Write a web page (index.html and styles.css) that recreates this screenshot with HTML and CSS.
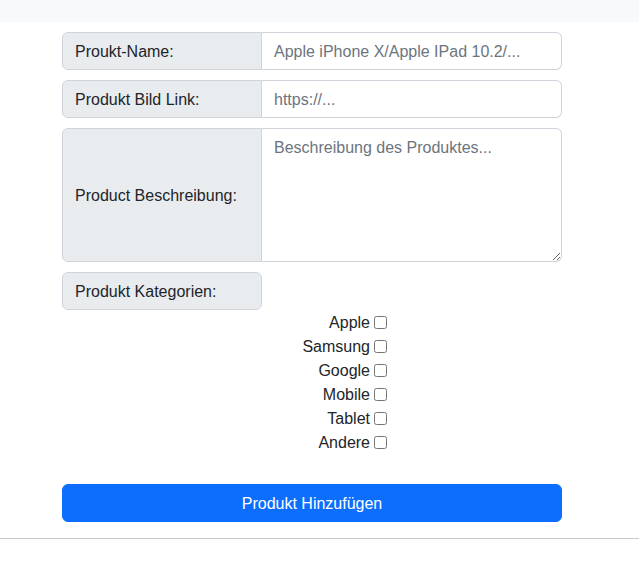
FILE: index.html
```html
<!DOCTYPE html>
<html lang="de">
<head>
<meta charset="utf-8">
<title>Produkt hinzufügen</title>
<link rel="stylesheet" href="styles.css">
</head>
<body>
<div class="topbar"></div>
<form class="form">
  <div class="group">
    <span class="label">Proukt-Name:</span>
    <input class="field" type="text" placeholder="Apple iPhone X/Apple IPad 10.2/...">
  </div>
  <div class="group">
    <span class="label">Produkt Bild Link:</span>
    <input class="field" type="text" placeholder="https://...">
  </div>
  <div class="group group-tall">
    <span class="label">Product Beschreibung:</span>
    <textarea class="field area" placeholder="Beschreibung des Produktes..."></textarea>
  </div>
  <div class="group group-single">
    <span class="label label-solo">Produkt Kategorien:</span>
  </div>
  <div class="checks">
    <label class="check"><span>Apple</span><input type="checkbox"></label>
    <label class="check"><span>Samsung</span><input type="checkbox"></label>
    <label class="check"><span>Google</span><input type="checkbox"></label>
    <label class="check"><span>Mobile</span><input type="checkbox"></label>
    <label class="check"><span>Tablet</span><input type="checkbox"></label>
    <label class="check"><span>Andere</span><input type="checkbox"></label>
  </div>
  <button class="submit" type="button">Produkt Hinzufügen</button>
</form>
<hr class="rule">
</body>
</html>
```
FILE: styles.css
```css
* { box-sizing: border-box; }
html, body { margin: 0; padding: 0; }
body {
  font-family: "Segoe UI", "Liberation Sans", Arial, sans-serif;
  font-size: 16px;
  line-height: 24px;
  color: #212529;
  background: #fff;
  width: 639px;
}
.topbar {
  height: 22px;
  background: #f8f9fa;
}
.form {
  width: 500px;
  margin: 10px 0 0 62px;
  display: flex;
  flex-direction: column;
}
.group {
  display: flex;
  height: 38px;
  margin-bottom: 10px;
}
.group-tall { height: 134px; }
.group-single { margin-bottom: 0; }
.label {
  width: 200px;
  flex: none;
  display: flex;
  align-items: center;
  padding: 7px 12px 5px;
  background: #e9ecef;
  border: 1px solid #ced4da;
  border-radius: 6px 0 0 6px;
  white-space: nowrap;
}
.label-solo { border-radius: 6px; }
.field {
  flex: 1;
  min-width: 0;
  font: inherit;
  color: #212529;
  padding: 7px 12px 5px;
  border: 1px solid #ced4da;
  border-left: 0;
  border-radius: 0 6px 6px 0;
  background: #fff;
  outline: none;
}
.field::placeholder { color: #6c757d; opacity: 1; }
.area { resize: vertical; line-height: 24px; }
.checks {
  width: 328px;
  display: flex;
  flex-direction: column;
  align-items: flex-end;
}
.check {
  display: flex;
  align-items: center;
  height: 24px;
}
.check span { padding-top: 1px; }
.check input {
  width: 13px;
  height: 13px;
  margin: 3px 3px 3px 4px;
}
.submit {
  margin-top: 30px;
  height: 38px;
  font: inherit;
  color: #fff;
  background: #0d6efd;
  border: 1px solid #0d6efd;
  border-radius: 6px;
  padding: 7px 12px 5px;
}
.rule {
  margin: 16px 0 0;
  border: 0;
  border-top: 1px solid #c8c8c8;
  width: 639px;
}
```
